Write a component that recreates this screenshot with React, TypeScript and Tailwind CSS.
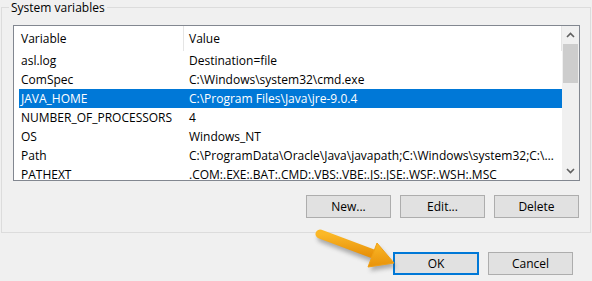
const rows = [
  { name: 'asl.log', value: 'Destination=file' },
  { name: 'ComSpec', value: 'C:\\Windows\\system32\\cmd.exe' },
  { name: 'JAVA_HOME', value: 'C:\\Program Files\\Java\\jre-9.0.4', selected: true },
  { name: 'NUMBER_OF_PROCESSORS', value: '4' },
  { name: 'OS', value: 'Windows_NT' },
  { name: 'Path', value: 'C:\\ProgramData\\Oracle\\Java\\javapath;C:\\Windows\\system32;C:\\Windows;C:\\Windows\\System32\\Wbem' },
  { name: 'PATHEXT', value: '.COM:.EXE:.BAT:.CMD:.VBS:.VBE:.JS:.JSE:.WSF:.WSH:.MSC' },
];

const Button = ({ label, primary }: { label: string; primary?: boolean }) => (
  <button
    className={
      primary
        ? 'w-[86px] h-[23px] bg-[#e1e1e1] border-2 border-[#0078d7] text-[12px] text-black leading-none'
        : 'w-[85px] h-[23px] bg-[#e1e1e1] border border-[#adadad] text-[12px] text-black leading-none'
    }
  >
    {label}
  </button>
);

const Arrow = () => (
  <svg className="absolute left-0 top-0 pointer-events-none" width="592" height="281" viewBox="0 0 592 281">
    <defs>
      <filter id="sh" x="-20%" y="-20%" width="140%" height="160%">
        <feGaussianBlur stdDeviation="2" />
      </filter>
      <linearGradient id="og" x1="0" y1="0" x2="0" y2="1">
        <stop offset="0" stopColor="#fbb827" />
        <stop offset="1" stopColor="#e8920a" />
      </linearGradient>
    </defs>
    <g opacity="0.45" filter="url(#sh)" transform="translate(2 4)">
      <line x1="320" y1="234" x2="375" y2="255" stroke="#555" strokeWidth="9" strokeLinecap="round" />
      <polygon points="394,263 377,243 368,267" fill="#555" />
    </g>
    <line x1="320" y1="234" x2="376" y2="255" stroke="url(#og)" strokeWidth="9" strokeLinecap="round" />
    <polygon points="394,263 377,243 368,267" fill="url(#og)" stroke="#f0a015" strokeWidth="1" strokeLinejoin="round" />
  </svg>
);

export default function App() {
  return (
    <div className="relative w-[592px] h-[281px] bg-[#f0f0f0] overflow-hidden text-black font-['Open_Sans',sans-serif] text-[12px]">
      {/* System variables group */}
      <div className="relative ml-[1px] mt-[7px] w-[590px] h-[226px] border border-[#dcdcdc] pl-[11px] pr-[10px] pt-[17px]">
        <span className="absolute left-[7px] top-[-8px] px-[2px] bg-[#f0f0f0] leading-[16px]">System variables</span>

        <div className="flex h-[156px] border border-[#828790] bg-white">
          <div className="flex-1 flex flex-col pl-[5px] overflow-hidden">
            <div className="flex h-[25px] items-center shrink-0">
              <div className="w-[164px] pl-[2px]">Variable</div>
              <div className="w-px h-full bg-[#e5e5e5]" />
              <div className="flex-1 pl-[5px]">Value</div>
              <div className="w-px h-full bg-[#e5e5e5]" />
            </div>
            {rows.map((r) => (
              <div
                key={r.name}
                className={`flex h-[19px] items-center shrink-0 ${r.selected ? 'bg-[#0078d7] text-white' : ''}`}
              >
                <div className="w-[164px] pl-[2px] whitespace-nowrap">{r.name}</div>
                <div className="flex-1 min-w-0 pl-[6px] pr-[4px] whitespace-nowrap overflow-hidden text-ellipsis">{r.value}</div>
              </div>
            ))}
          </div>
          <div className="w-[17px] flex flex-col bg-[#f0f0f0] shrink-0">
            <div className="h-[18px] flex items-center justify-center">
              <svg width="9" height="6" viewBox="0 0 9 6">
                <path d="M1 5 L4.5 1.5 L8 5" fill="none" stroke="#606060" strokeWidth="1.6" />
              </svg>
            </div>
            <div className="h-[39px] mx-[1px] bg-[#cdcdcd]" />
            <div className="flex-1" />
            <div className="h-[18px] flex items-center justify-center">
              <svg width="9" height="6" viewBox="0 0 9 6">
                <path d="M1 1 L4.5 4.5 L8 1" fill="none" stroke="#606060" strokeWidth="1.6" />
              </svg>
            </div>
          </div>
        </div>

        <div className="flex justify-end gap-[9px] mt-[14px] mr-[1px]">
          <Button label="New..." />
          <Button label="Edit..." />
          <Button label="Delete" />
        </div>
      </div>

      {/* Dialog buttons */}
      <div className="flex justify-end gap-[9px] mt-[19px] mr-[19px]">
        <Button label="OK" primary />
        <Button label="Cancel" />
      </div>

      <Arrow />
    </div>
  );
}
